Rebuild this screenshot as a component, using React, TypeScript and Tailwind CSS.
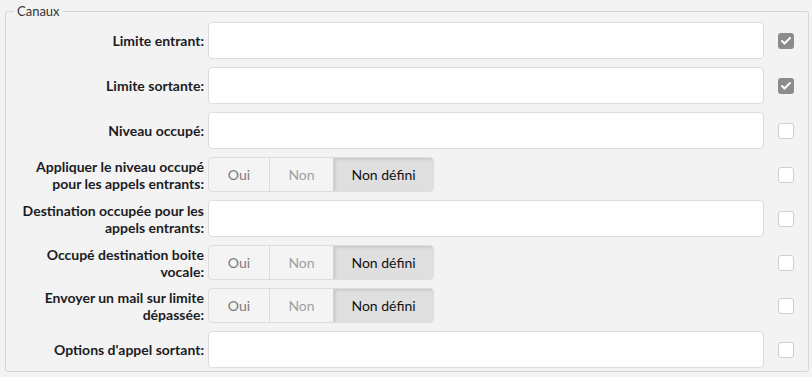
import { Check } from "lucide-react";

type Row = { label: string[]; kind: "input" | "toggle"; checked: boolean };

const rows: Row[] = [
  { label: ["Limite entrant:"], kind: "input", checked: true },
  { label: ["Limite sortante:"], kind: "input", checked: true },
  { label: ["Niveau occupé:"], kind: "input", checked: false },
  { label: ["Appliquer le niveau occupé", "pour les appels entrants:"], kind: "toggle", checked: false },
  { label: ["Destination occupée pour les", "appels entrants:"], kind: "input", checked: false },
  { label: ["Occupé destination boite", "vocale:"], kind: "toggle", checked: false },
  { label: ["Envoyer un mail sur limite", "dépassée:"], kind: "toggle", checked: false },
  { label: ["Options d'appel sortant:"], kind: "input", checked: false },
];

function Toggle() {
  return (
    <div className="flex h-[35px] w-[226px] rounded-[4px] border border-[#dcdcdc] bg-[#f4f4f4] text-[14px] overflow-hidden">
      <div className="w-[61px] flex items-center justify-center text-[#7a7a7a] border-r border-[#dcdcdc]">Oui</div>
      <div className="w-[64px] flex items-center justify-center text-[#a0a0a0] border-r border-[#cfcfcf]">Non</div>
      <div className="flex-1 flex items-center justify-center bg-[#dfdfdf] text-[#111] shadow-[inset_2px_2px_2px_rgba(0,0,0,0.08)]">
        Non défini
      </div>
    </div>
  );
}

function Box({ checked }: { checked: boolean }) {
  if (checked) {
    return (
      <div className="w-4 h-4 rounded-[3px] bg-[#8c8c8c] flex items-center justify-center">
        <Check size={12} strokeWidth={4} className="text-white" />
      </div>
    );
  }
  return <div className="w-4 h-4 rounded-[3px] border border-[#cfcfcf] bg-white" />;
}

export default function App() {
  return (
    <div className="w-[812px] h-[377px] bg-[#f3f3f3] pt-[4px] px-[5px] font-['Lato','Open_Sans',sans-serif] text-[#222]">
      <fieldset className="border border-[#d6d6d6] rounded-[3px] pl-[3px] pr-[14px] pt-[3px] h-[368px]">
        <legend className="ml-[5px] px-[3px] text-[13px] text-[#333] leading-[15px]">Canaux</legend>
        <div className="flex flex-col gap-[8px]">
          {rows.map((r, i) => (
            <div key={i} className="flex items-center">
              <div className="w-[199px] pr-[4px] text-right text-[14px] font-bold leading-[17px] text-[#1c1c24]">
                {r.label.map((l, j) => (
                  <div key={j}>{l}</div>
                ))}
              </div>
              <div className="w-[556px]">
                {r.kind === "input" ? (
                  <div className="h-[37px] rounded-[4px] border border-[#dcdcdc] bg-white" />
                ) : (
                  <Toggle />
                )}
              </div>
              <div className="ml-[14px]">
                <Box checked={r.checked} />
              </div>
            </div>
          ))}
        </div>
      </fieldset>
    </div>
  );
}
